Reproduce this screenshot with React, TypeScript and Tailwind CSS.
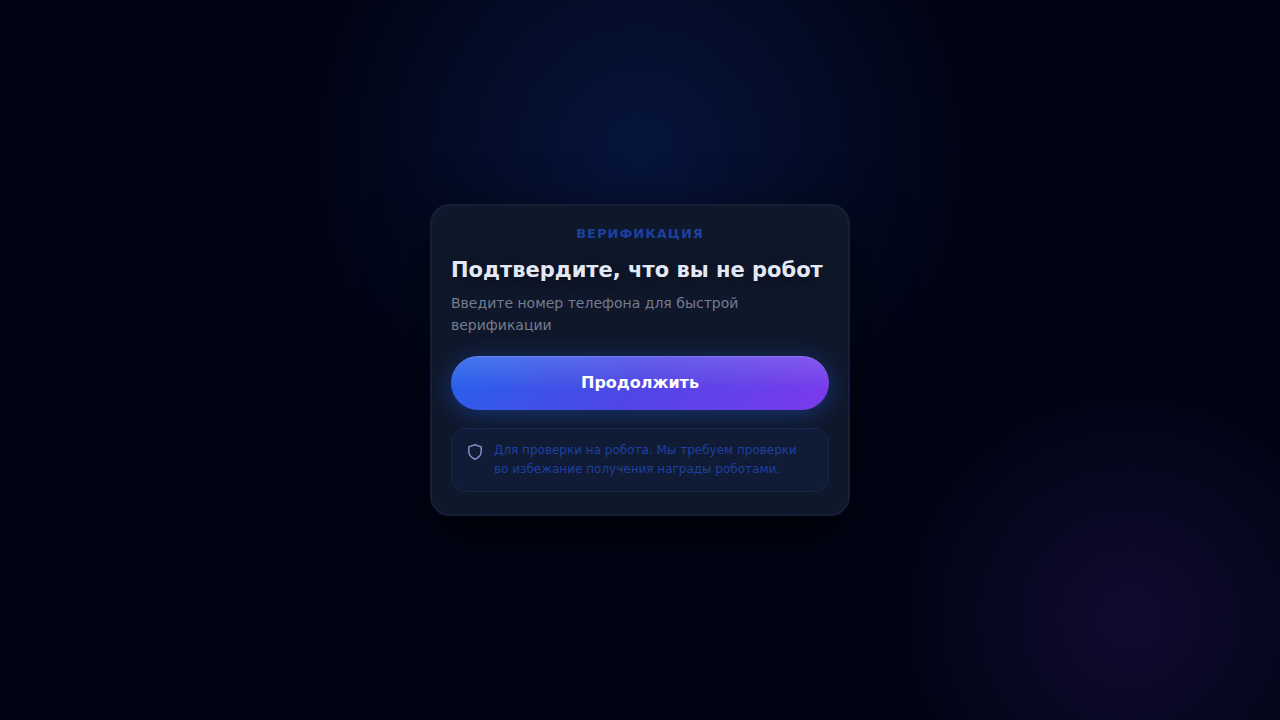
import { useState } from 'react'

function ShieldIcon() {
  return (
    <svg
      className="mt-[3px] w-4 h-4 shrink-0 text-[#8190d0]"
      viewBox="0 0 16 16"
      fill="none"
      stroke="currentColor"
      strokeWidth="1.5"
      strokeLinejoin="round"
      aria-hidden="true"
    >
      <path d="M8 .8 14.2 2.900v4.600c0 3.600-2.300 6.100-6.200 7.800C4.100 13.600 1.800 11.100 1.800 7.500V2.900L8 .8Z" />
    </svg>
  )
}

export default function App() {
  const [pending, setPending] = useState(false)
  return (
    <main className="relative flex min-h-screen items-center justify-center overflow-hidden bg-[#010415] px-4 font-['DejaVu_Sans',sans-serif]">
      <div className="absolute inset-0 bg-[radial-gradient(circle_320px_at_50%_150px,rgba(29,88,216,0.2),transparent)]" />
      <div className="absolute inset-0 bg-[radial-gradient(circle_220px_at_calc(100%_-_150px)_calc(100%_-_102px),rgba(124,58,237,0.13),transparent)]" />
      <section className="relative w-full max-w-[420px] rounded-[20px] border-2 border-[#151f38] bg-[#0f172a] px-[19px] pt-5 pb-[22px] shadow-[0_20px_60px_rgba(0,0,0,0.7)]">
        <p className="text-center text-[13px] leading-4 font-bold tracking-[1px] text-[#1e40a0] uppercase">
          Верификация
        </p>
        <h1 className="mt-3 text-[21px] leading-8 font-bold whitespace-nowrap text-[#e2e8f5] [text-shadow:0_2px_12px_rgba(0,0,0,0.4)]">
          Подтвердите, что вы не робот
        </h1>
        <p className="mt-1.5 text-[14px] leading-[22px] text-[#747d8e]">
          Введите номер телефона для быстрой верификации
        </p>
        <button
          type="button"
          aria-pressed={pending}
          onClick={() => setPending(true)}
          className="mt-5 h-[54px] w-full cursor-pointer rounded-full bg-[linear-gradient(180deg,rgba(255,255,255,0.14),transparent_60%),linear-gradient(135deg,#2563eb,#4f46e5_50%,#7c3aed)] text-[16px] font-bold text-white shadow-[0_4px_24px_rgba(37,99,235,0.4),inset_0_1px_0_rgba(255,255,255,0.15)]"
        >
          Продолжить
        </button>
        <div className="mt-[18px] flex gap-[11px] rounded-[14px] border border-[#14254a] bg-[#101b35] px-[15px] py-3">
          <ShieldIcon />
          <p className="text-[12px] leading-[19px] text-[#1e40a0]">
            Для проверки на робота. Мы требуем проверки во избежание получения награды роботами.
          </p>
        </div>
      </section>
    </main>
  )
}
